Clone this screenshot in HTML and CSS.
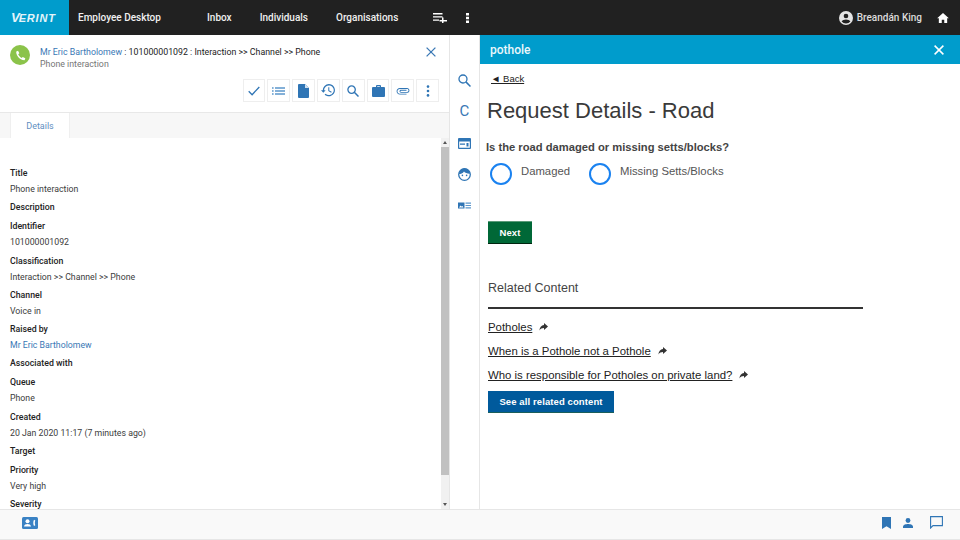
FILE: index.html
```html
<!DOCTYPE html>
<html lang="en">
<head>
    <meta charset="UTF-8">
    <title>Employee Desktop</title>
    <link rel="stylesheet" href="styles.css">
</head>
<body>
<div class="app">
    <header class="topbar">
        <div class="logo"><span class="logo-v">V</span>ERINT</div>
        <div class="product">Employee Desktop</div>
        <nav class="nav">
            <a>Inbox</a>
            <a>Individuals</a>
            <a>Organisations</a>
        </nav>
        <svg class="nav-add" width="14" height="10" viewBox="0 0 14 10"><path fill="#fff" d="M0 0h9.500v1.400H0zM0 3.200h9.500v1.400H0zM0 6.400h6v1.400H0zM9 4.500h1.500v2.500H14v1.400h-3.500V10H9V8.400H6.500V7H9z"/></svg>
        <svg class="nav-more" width="3" height="10" viewBox="0 0 3 10"><path fill="#fff" d="M0 0h3v2.400H0zM0 3.800h3v2.400H0zM0 7.600h3V10H0z"/></svg>
        <div class="user">
            <svg width="14" height="14" viewBox="0 0 24 24"><path fill="#e4e4e4" d="M12 0a12 12 0 1 0 0 24 12 12 0 0 0 0-24zm0 4.500a4 4 0 1 1 0 8 4 4 0 0 1 0-8zm0 17a9.500 9.500 0 0 1-7.500-3.700c.5-2 4.800-3.300 7.500-3.300s7 1.300 7.500 3.300A9.500 9.500 0 0 1 12 21.500z"/></svg>
            <span>Breandán King</span>
        </div>
        <svg class="home" width="12" height="10" viewBox="0 0 14 12"><path fill="#fff" d="M7 0 0 6.300h2V12h3.500V8h3v4H12V6.300h2z"/></svg>
    </header>

    <main class="main">
        <section class="case">
            <div class="case-head">
                <div class="case-title">
                    <span class="avatar">
                        <svg width="11" height="11" viewBox="0 0 24 24"><path fill="#fff" d="M6.600 1.500 2.800 3C1.500 9 9 22 21 22.500l1.500-4.500-5.500-3-2.500 2.500C11 16 8 12.500 7 9.500L9.500 7z"/></svg>
                    </span>
                    <div class="case-text">
                        <div class="case-line"><a class="link">Mr Eric Bartholomew</a> : 101000001092 : Interaction &gt;&gt; Channel &gt;&gt; Phone</div>
                        <div class="case-sub">Phone interaction</div>
                    </div>
                    <svg class="case-close" width="10" height="10" viewBox="0 0 10 10"><path stroke="#3a78b5" stroke-width="1.300" d="M.6.600l8.800 8.800M9.400.600.6 9.400"/></svg>
                </div>
                <div class="tools">
                    <button class="tool"><svg width="12" height="10" viewBox="0 0 12 10"><path fill="none" stroke="#2f75b5" stroke-width="1.300" d="M.7 5.300l3.400 3.400L11.300 1"/></svg></button>
                    <button class="tool"><svg width="13" height="8" viewBox="0 0 13 8"><path fill="#5b96cc" d="M0 .2h1.600v1.500H0zM3 .2h10v1.500H3zM0 3.200h1.600v1.500H0zM3 3.200h10v1.500H3zM0 6.200h1.600v1.500H0zM3 6.200h10v1.500H3z"/></svg></button>
                    <button class="tool"><svg width="11" height="14" viewBox="0 0 11 14"><path fill="#2f75b5" d="M1 0h6l4 4v9a1 1 0 0 1-1 1H1a1 1 0 0 1-1-1V1a1 1 0 0 1 1-1z"/><path fill="#cfe0f0" d="M7 0v4h4z"/></svg></button>
                    <button class="tool"><svg width="14" height="13" viewBox="0 0 24 22"><path fill="#2f75b5" d="M13.500 0a10.500 10.500 0 0 0-10.500 10.500H0l4 4.200 4-4.200H5.200a8.300 8.300 0 1 1 2.600 6.100l-1.600 1.600A10.500 10.500 0 1 0 13.500 0zM12.500 5.500v6.200l5 3 .9-1.400-4.200-2.500V5.500z"/></svg></button>
                    <button class="tool"><svg width="12" height="12" viewBox="0 0 12 12"><circle cx="4.600" cy="4.600" r="3.700" fill="none" stroke="#2f75b5" stroke-width="1.300"/><path stroke="#2f75b5" stroke-width="1.500" d="M7.300 7.300l4.200 4.200"/></svg></button>
                    <button class="tool"><svg width="13" height="12" viewBox="0 0 13 12"><path fill="#2f75b5" d="M4 2V1a1 1 0 0 1 1-1h3a1 1 0 0 1 1 1v1h3a1 1 0 0 1 1 1v8a1 1 0 0 1-1 1H1a1 1 0 0 1-1-1V3a1 1 0 0 1 1-1zm1.200 0h2.600V1.200H5.200z"/></svg></button>
                    <button class="tool"><svg width="14" height="14" viewBox="0 0 24 24"><path fill="#2f75b5" transform="rotate(90 12 12)" d="M16.500 6v11.500c0 2.210-1.790 4-4 4s-4-1.790-4-4V5c0-1.380 1.120-2.500 2.500-2.500s2.500 1.120 2.500 2.500v10.500c0 .55-.45 1-1 1s-1-.45-1-1V6H10v9.500c0 1.380 1.120 2.500 2.500 2.500s2.500-1.120 2.500-2.500V5c0-2.210-1.790-4-4-4S7 2.790 7 5v12.500c0 3.040 2.460 5.500 5.500 5.500s5.500-2.460 5.500-5.500V6h-1.500z"/></svg></button>
                    <button class="tool"><svg width="4" height="12" viewBox="0 0 4 12"><g fill="#2f75b5"><circle cx="2" cy="1.600" r="1.300"/><circle cx="2" cy="6" r="1.300"/><circle cx="2" cy="10.400" r="1.300"/></g></svg></button>
                </div>
            </div>
            <div class="tabs"><div class="tab">Details</div></div>
            <div class="detail-wrap">
                <div class="details">
                    <div class="label">Title</div>
                    <div class="value">Phone interaction</div>
                    <div class="label">Description</div>
                    <div class="label">Identifier</div>
                    <div class="value">101000001092</div>
                    <div class="label">Classification</div>
                    <div class="value">Interaction &gt;&gt; Channel &gt;&gt; Phone</div>
                    <div class="label">Channel</div>
                    <div class="value">Voice in</div>
                    <div class="label">Raised by</div>
                    <div class="value"><a class="link">Mr Eric Bartholomew</a></div>
                    <div class="label">Associated with</div>
                    <div class="label">Queue</div>
                    <div class="value">Phone</div>
                    <div class="label">Created</div>
                    <div class="value">20 Jan 2020 11:17 (7 minutes ago)</div>
                    <div class="label">Target</div>
                    <div class="label">Priority</div>
                    <div class="value">Very high</div>
                    <div class="label">Severity</div>
                </div>
                <div class="scrollbar">
                    <span class="arrow-up"></span>
                    <span class="thumb"></span>
                    <span class="arrow-down"></span>
                </div>
            </div>
        </section>

        <aside class="rail">
            <svg width="13" height="13" viewBox="0 0 12 12"><circle cx="4.600" cy="4.600" r="3.700" fill="none" stroke="#2f75b5" stroke-width="1.200"/><path stroke="#2f75b5" stroke-width="1.400" d="M7.300 7.300l4.200 4.200"/></svg>
            <span class="rail-c">C</span>
            <svg width="13" height="11" viewBox="0 0 13 11"><path fill="#2f75b5" d="M1 0h11a1 1 0 0 1 1 1v9a1 1 0 0 1-1 1H1a1 1 0 0 1-1-1V1a1 1 0 0 1 1-1zm.2 3.500v6.300h10.600V3.500zM2 5.500h5v1.200H2zM8.500 5h2v3.500h-2z"/></svg>
            <svg width="13" height="13" viewBox="0 0 13 13"><circle cx="6.500" cy="6.500" r="5.800" fill="#fff" stroke="#2f75b5" stroke-width="1.300"/><path fill="#2f75b5" d="M1 6c1.500 0 4-.5 5-2.500C7 5 10 5.800 12 5.600 11.700 2.500 9.500.5 6.500.5S1.300 2.800 1 6z"/><circle cx="4.400" cy="7.400" r=".8" fill="#2f75b5"/><circle cx="8.600" cy="7.400" r=".8" fill="#2f75b5"/></svg>
            <svg width="13" height="7" viewBox="0 0 13 7"><path fill="#2f75b5" d="M0 .5h6.500v6H0z"/><path fill="#fff" d="M1 5.500l1.500-2 1 1 1-.5 1 1.500z"/><path fill="#5b96cc" d="M7.500.5H13v1.200H7.500zM7.500 2.900H13v1.200H7.500zM7.500 5.300H13v1.200H7.500z"/></svg>
        </aside>

        <section class="form">
            <div class="form-bar">
                <span>pothole</span>
                <svg width="10" height="10" viewBox="0 0 10 10"><path stroke="#fff" stroke-width="1.500" d="M.6.600l8.800 8.800M9.400.600.6 9.400"/></svg>
            </div>
            <div class="form-body">
                <a class="back">&#9668; Back</a>
                <h1>Request Details - Road</h1>
                <div class="question">Is the road damaged or missing setts/blocks?</div>
                <div class="options">
                    <div class="option"><span class="radio"></span><span>Damaged</span></div>
                    <div class="option"><span class="radio"></span><span>Missing Setts/Blocks</span></div>
                </div>
                <button class="btn btn-next">Next</button>
                <h2>Related Content</h2>
                <ul class="related">
                    <li><a>Potholes</a><svg width="9" height="8" viewBox="0 0 9 8"><path fill="#333" d="M5 0l4 3.500L5 7V5C3 5 1.500 5.700.4 7.500.6 4.500 2.300 2.300 5 2z"/></svg></li>
                    <li><a>When is a Pothole not a Pothole</a><svg width="9" height="8" viewBox="0 0 9 8"><path fill="#333" d="M5 0l4 3.500L5 7V5C3 5 1.500 5.700.4 7.500.6 4.500 2.300 2.300 5 2z"/></svg></li>
                    <li><a>Who is responsible for Potholes on private land?</a><svg width="9" height="8" viewBox="0 0 9 8"><path fill="#333" d="M5 0l4 3.500L5 7V5C3 5 1.500 5.700.4 7.500.6 4.500 2.300 2.300 5 2z"/></svg></li>
                </ul>
                <button class="btn btn-all">See all related content</button>
            </div>
        </section>
    </main>

    <footer class="footer">
        <svg width="16" height="12" viewBox="0 0 16 12"><rect width="16" height="12" rx="1.500" fill="#3a82c4"/><circle cx="5.500" cy="4.200" r="2" fill="#fff"/><path fill="#fff" d="M2 9.500c0-1.700 2-2.500 3.500-2.500S9 7.800 9 9.500zM12 2.800l1.300.7c-.6 1.500-.6 3.200 0 4.800l-1.300.8c-1-2-1-4.300 0-6.300z"/></svg>
        <div class="footer-right">
            <svg width="9" height="12" viewBox="0 0 9 12"><path fill="#2f75b5" d="M0 0h9v12L4.500 9.300 0 12z"/></svg>
            <svg class="foot-user" width="10" height="10" viewBox="0 0 10 10"><circle cx="5" cy="2.500" r="2.400" fill="#2f75b5"/><path fill="#2f75b5" d="M0 10V8.500C0 6.800 3 6 5 6s5 .8 5 2.500V10z"/></svg>
            <svg class="foot-chat" width="13" height="13" viewBox="0 0 13 13"><path fill="none" stroke="#2f75b5" stroke-width="1.100" d="M.6.600h11.800v9H3L.6 12z"/></svg>
        </div>
    </footer>
</div>
</body>
</html>
```

FILE: styles.css
```css
*{
    box-sizing: border-box;
}
body{
    margin: 0;
    background-color: #fff;
    font-family: Roboto, sans-serif;
}
.app{
    width: 960px;
    height: 540px;
    display: flex;
    flex-direction: column;
    overflow: hidden;
}
.topbar{
    height: 35px;
    flex: none;
    display: flex;
    align-items: center;
    background-color: #212121;
    color: #f0f0f0;
    font-size: 10px;
    font-weight: 500;
}
.logo{
    width: 69px;
    height: 35px;
    background-color: #009ccc;
    color: #e4f4fa;
    font: italic bold 11px "Liberation Sans", sans-serif;
    letter-spacing: .8px;
    line-height: 35px;
    padding-left: 11px;
}
.logo-v{
    font-size: 13px;
    letter-spacing: -1px;
}
.product{
    margin-left: 9px;
    width: 129px;
}
.nav{
    display: flex;
    gap: 28px;
}
.nav-add{
    margin-left: 35px;
}
.nav-more{
    margin-left: 19px;
}
.user{
    margin-left: auto;
    display: flex;
    align-items: center;
    gap: 4px;
    color: #dcdcdc;
}
.home{
    margin: 0 11px 0 15px;
}
.main{
    flex: 1;
    display: flex;
    min-height: 0;
}
.case{
    width: 450px;
    display: flex;
    flex-direction: column;
    border-right: 1px solid #e6e6e6;
}
.case-head{
    height: 78px;
    flex: none;
    padding: 10px 10px 0 10px;
    border-bottom: 1px solid #e8e8e8;
}
.case-title{
    display: flex;
}
.avatar{
    width: 20px;
    height: 20px;
    border-radius: 50%;
    background-color: #8bc34a;
    display: flex;
    align-items: center;
    justify-content: center;
}
.case-text{
    margin: 1px 0 0 10px;
    font-size: 8.800px;
    flex: 1;
}
.case-line{
    color: #222;
    line-height: 12px;
}
.case-sub{
    color: #757575;
    line-height: 13px;
}
.link{
    color: #3a78b5;
}
.case-close{
    margin: 2px 3px 0 0;
}
.tools{
    display: flex;
    justify-content: flex-end;
    gap: 2px;
    margin-top: 8px;
}
.tool{
    width: 22.800px;
    height: 23px;
    padding: 0;
    background-color: #fff;
    border: 1px solid #eee;
    display: flex;
    align-items: center;
    justify-content: center;
}
.tabs{
    height: 25px;
    flex: none;
    background-color: #f7f7f7;
    padding-left: 10px;
}
.tab{
    width: 60px;
    height: 25px;
    background-color: #fff;
    border-right: 1px solid #efefef;
    border-left: 1px solid #efefef;
    color: #5f8fbf;
    font-size: 9px;
    line-height: 27px;
    text-align: center;
}
.detail-wrap{
    flex: 1;
    display: flex;
    min-height: 0;
}
.details{
    flex: 1;
    padding: 28px 0 0 10px;
    font-size: 8.750px;
}
.label{
    color: #222;
    font-weight: 500;
    line-height: 15px;
}
.value{
    color: #3c3c3c;
    line-height: 16px;
    margin-bottom: 3.300px;
}
.label + .label{
    margin-top: 4px;
}
.scrollbar{
    width: 8px;
    flex: none;
    background-color: #f1f1f1;
    display: flex;
    flex-direction: column;
}
.thumb{
    flex: none;
    height: 328px;
    background-color: #c1c1c1;
}
.arrow-up, .arrow-down{
    height: 9px;
    flex: none;
    position: relative;
}
.arrow-down{
    margin-top: auto;
}
.arrow-up::after, .arrow-down::after{
    content: "";
    position: absolute;
    left: 2px;
    top: 3px;
    border-left: 2px solid transparent;
    border-right: 2px solid transparent;
}
.arrow-up::after{
    border-bottom: 3px solid #555;
}
.arrow-down::after{
    border-top: 3px solid #555;
}
.rail{
    width: 30px;
    flex: none;
    border-right: 1px solid #e6e6e6;
    display: grid;
    grid-auto-rows: 31.300px;
    align-content: start;
    place-items: center;
    padding-top: 30px;
}
.rail-c{
    color: #3a78b5;
    font-size: 15px;
    line-height: 17px;
}
.form{
    flex: 1;
    display: flex;
    flex-direction: column;
}
.form-bar{
    height: 29px;
    flex: none;
    background-color: #009ccc;
    color: #eaf7fb;
    font-size: 12px;
    font-weight: 500;
    display: flex;
    align-items: center;
    justify-content: space-between;
    padding: 0 16px 0 10px;
}
.form-body{
    flex: 1;
    padding: 9px 0 0 8px;
    font-family: "Liberation Sans", sans-serif;
    color: #333;
}
.back{
    display: block;
    margin-left: 3px;
    color: #222;
    font-size: 9.500px;
    line-height: 11px;
    text-decoration: underline;
}
h1{
    margin: 14px 0 0 -1px;
    font-size: 22px;
    font-weight: 400;
    line-height: 26px;
    color: #3a3a3a;
}
.question{
    margin: 16px 0 0 -2px;
    font-size: 11.200px;
    font-weight: 700;
    line-height: 14px;
    color: #444;
}
.options{
    display: flex;
    gap: 19px;
    margin: 9px 0 0 2px;
    font-size: 11.300px;
    color: #555;
}
.option{
    display: flex;
    gap: 9px;
    line-height: 16px;
}
.radio{
    width: 22px;
    height: 22px;
    border: 2px solid #1a82f0;
    border-radius: 50%;
    background-color: #fff;
}
.btn{
    display: block;
    height: 23px;
    padding: 0;
    border: 0;
    color: #fff;
    font: 700 9.500px "Liberation Sans", sans-serif;
    letter-spacing: .1px;
}
.btn-next{
    width: 44px;
    margin-top: 36px;
    background-color: #006837;
    border-top: 1px solid #5a9a78;
    border-bottom: 1px solid #00250f;
}
h2{
    margin: 36px 0 0 0;
    font-size: 12.500px;
    font-weight: 400;
    line-height: 16px;
    width: 375px;
    padding-bottom: 11px;
    border-bottom: 2px solid #333;
    color: #444;
}
.related{
    list-style: none;
    margin: 9px 0 0 0;
    padding: 0;
    font-size: 11.400px;
}
.related li{
    height: 24px;
    line-height: 18px;
    color: #222;
    display: flex;
    align-items: flex-start;
    gap: 7px;
}
.related a{
    text-decoration: underline;
}
.related svg{
    margin-top: 5px;
}
.btn-all{
    width: 126px;
    height: 22px;
    margin-top: 1px;
    background-color: #005a9c;
    border-bottom: 1px solid #1b5e5a;
}
.footer{
    height: 31px;
    flex: none;
    background-color: #f9f9f9;
    border-top: 1px solid #e6e6e6;
    border-bottom: 1px solid #e6e6e6;
    display: flex;
    align-items: center;
    justify-content: space-between;
    padding: 0 17px 4px 22px;
}
.footer-right{
    display: flex;
    align-items: center;
}
.foot-user{
    margin-left: 12px;
}
.foot-chat{
    margin-left: 17px;
}
```
